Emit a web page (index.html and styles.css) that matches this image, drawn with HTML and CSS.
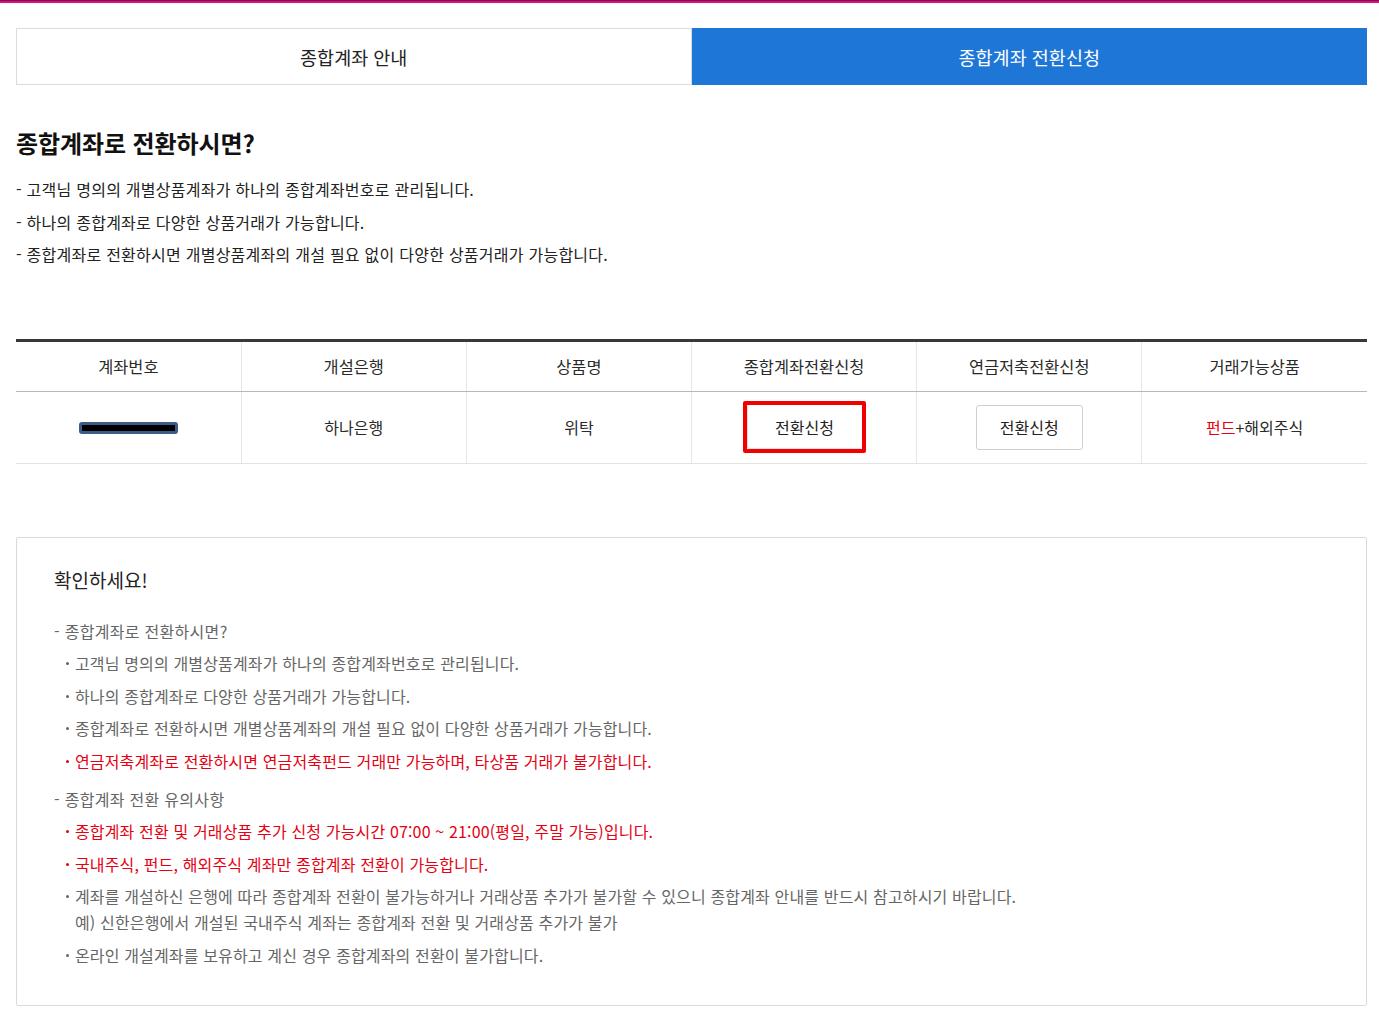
FILE: index.html
```html
<!DOCTYPE html>
<html lang="ko">
<head>
    <meta charset="UTF-8">
    <meta name="viewport" content="width=device-width, initial-scale=1.0">
    <title>종합계좌 전환신청</title>
    <link rel="stylesheet" href="styles.css">
</head>
<body>
    <div class="top-line"></div>

    <div class="page">
        <div class="tabs">
            <a class="tab" href="#">종합계좌 안내</a>
            <a class="tab active" href="#">종합계좌 전환신청</a>
        </div>

        <h2 class="title">종합계좌로 전환하시면?</h2>
        <ul class="intro">
            <li>- 고객님 명의의 개별상품계좌가 하나의 종합계좌번호로 관리됩니다.</li>
            <li>- 하나의 종합계좌로 다양한 상품거래가 가능합니다.</li>
            <li>- 종합계좌로 전환하시면 개별상품계좌의 개설 필요 없이 다양한 상품거래가 가능합니다.</li>
        </ul>

        <table class="account-table">
            <thead>
                <tr>
                    <th>계좌번호</th>
                    <th>개설은행</th>
                    <th>상품명</th>
                    <th>종합계좌전환신청</th>
                    <th>연금저축전환신청</th>
                    <th>거래가능상품</th>
                </tr>
            </thead>
            <tbody>
                <tr>
                    <td><span class="masked"></span></td>
                    <td>하나은행</td>
                    <td>위탁</td>
                    <td><span class="highlight"><button class="btn" type="button">전환신청</button></span></td>
                    <td><button class="btn" type="button">전환신청</button></td>
                    <td><span class="red">펀드</span>+해외주식</td>
                </tr>
            </tbody>
        </table>

        <div class="notice">
            <h3>확인하세요!</h3>
            <div class="notice-group">
                <p class="group-title">- 종합계좌로 전환하시면?</p>
                <ul>
                    <li>고객님 명의의 개별상품계좌가 하나의 종합계좌번호로 관리됩니다.</li>
                    <li>하나의 종합계좌로 다양한 상품거래가 가능합니다.</li>
                    <li>종합계좌로 전환하시면 개별상품계좌의 개설 필요 없이 다양한 상품거래가 가능합니다.</li>
                    <li class="red">연금저축계좌로 전환하시면 연금저축펀드 거래만 가능하며, 타상품 거래가 불가합니다.</li>
                </ul>
            </div>
            <div class="notice-group">
                <p class="group-title">- 종합계좌 전환 유의사항</p>
                <ul>
                    <li class="red">종합계좌 전환 및 거래상품 추가 신청 가능시간 07:00 ~ 21:00(평일, 주말 가능)입니다.</li>
                    <li class="red">국내주식, 펀드, 해외주식 계좌만 종합계좌 전환이 가능합니다.</li>
                    <li>계좌를 개설하신 은행에 따라 종합계좌 전환이 불가능하거나 거래상품 추가가 불가할 수 있으니 종합계좌 안내를 반드시 참고하시기 바랍니다.<br>예) 신한은행에서 개설된 국내주식 계좌는 종합계좌 전환 및 거래상품 추가가 불가</li>
                    <li>온라인 개설계좌를 보유하고 계신 경우 종합계좌의 전환이 불가합니다.</li>
                </ul>
            </div>
        </div>
    </div>
</body>
</html>
```

FILE: styles.css
```css
* {
    box-sizing: border-box;
    font-family: "Noto Sans CJK KR", "Noto Sans", sans-serif;
}

body {
    margin: 0;
    background-color: #fff;
    color: #222;
}

.top-line {
    height: 3px;
    border-top: 1px solid #6b1750;
    background-color: #e8097f;
}

.page {
    padding: 25px 12px 0 16px;
}

.tabs {
    display: flex;
}

.tab {
    flex: 1;
    height: 57px;
    display: flex;
    align-items: center;
    justify-content: center;
    border: 1px solid #dcdcdc;
    color: #222;
    font-size: 18.5px;
    text-decoration: none;
}

.tab.active {
    background-color: #1e76d7;
    border-color: #1e76d7;
    color: #fff;
}

.title {
    margin: 43px 0 15px;
    font-size: 24px;
    line-height: 30px;
    font-weight: 700;
    letter-spacing: -0.1px;
    color: #111;
}

.intro {
    list-style: none;
    margin: 0;
    padding: 0;
}

.intro li {
    font-size: 16px;
    line-height: 32.5px;
    letter-spacing: 0.25px;
    color: #222;
}

.account-table {
    width: 100%;
    margin-top: 68px;
    border-collapse: collapse;
    table-layout: fixed;
    border-top: 3px solid #383838;
}

.account-table th,
.account-table td {
    text-align: center;
    font-size: 16px;
    color: #2a2a2a;
    border-left: 1px solid #e6e6e6;
}

.account-table th:first-child,
.account-table td:first-child {
    border-left: none;
}

.account-table th {
    height: 51px;
    font-weight: 400;
    font-size: 16.4px;
    border-bottom: 1px solid #b8b8b8;
}

.account-table td {
    height: 72px;
    border-bottom: 1px solid #e3e3e3;
}

.masked {
    display: inline-block;
    width: 99px;
    height: 12px;
    margin-top: -4px;
    background-color: #000;
    border: 3px solid #3b5b89;
    border-radius: 3px;
    vertical-align: middle;
}

.btn {
    width: 107px;
    height: 45px;
    background-color: #fff;
    border: 1px solid #cfcfcf;
    border-radius: 3px;
    font-size: 16px;
    color: #222;
    cursor: pointer;
}

.highlight {
    display: inline-block;
    border: 4px solid #f20000;
    border-radius: 2px;
    line-height: 0;
}

.highlight .btn {
    width: 115px;
    height: 44px;
    border-color: #e0e0e0;
    border-top: none;
    border-right: none;
}

.red {
    color: #e60012 !important;
}

.notice {
    margin-top: 73px;
    padding: 30px 36px 25px 37px;
    border: 1px solid #dadada;
    border-radius: 2px;
}

.notice h3 {
    margin: 0 0 26px;
    font-size: 19px;
    line-height: 24px;
    font-weight: 400;
    color: #222;
}

.notice-group {
    margin-bottom: 12px;
}

.group-title {
    margin: 0;
    font-size: 16px;
    line-height: 26px;
    letter-spacing: 0.3px;
    color: #666;
}

.notice ul {
    list-style: none;
    margin: 0;
    padding: 0 0 0 21px;
}

.notice li {
    position: relative;
    margin-top: 6.5px;
    font-size: 16px;
    line-height: 26px;
    letter-spacing: 0.15px;
    color: #666;
}

.notice li::before {
    content: "";
    position: absolute;
    left: -9px;
    top: 12px;
    width: 3px;
    height: 3px;
    border-radius: 50%;
    background-color: currentColor;
}
```
